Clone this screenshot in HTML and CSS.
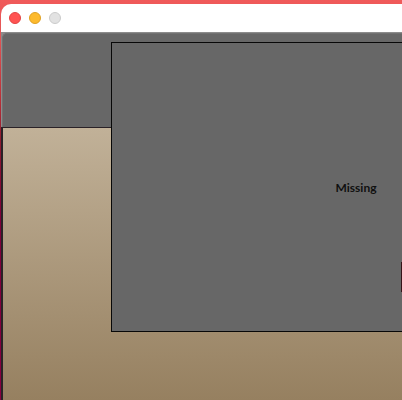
FILE: index.html
```
<!DOCTYPE html>
<html lang="en">
<head>
<meta charset="utf-8">
<title>Missing</title>
<link rel="stylesheet" href="styles.css">
</head>
<body>
<div class="window">
  <header class="titlebar">
    <button class="light close" type="button" aria-label="Close"></button>
    <button class="light minimize" type="button" aria-label="Minimize"></button>
    <button class="light zoom" type="button" aria-label="Zoom" disabled></button>
  </header>
  <main class="stage">
    <div class="header"><div class="panel"></div></div>
    <div class="backdrop"></div>
    <section class="dialog" role="dialog" aria-labelledby="message">
      <p class="message" id="message">Missing</p>
      <button class="action" type="button" aria-label="Confirm"></button>
    </section>
  </main>
</div>
</body>
</html>
```
FILE: styles.css
```
* {
  box-sizing: border-box;
}

body {
  margin: 0;
  height: 100vh;
  padding: 4px 0 0 1px;
  overflow: hidden;
  background: linear-gradient(#f05a5a 0, #e45656 32px, #b83038 100px, #8f1c30 140px, #80003a 220px, #8a0040 100%);
  font-family: Lato, sans-serif;
}

.window {
  display: flex;
  flex-direction: column;
  height: 100%;
  border-top-left-radius: 10px;
  background: #fff;
  overflow: hidden;
}

.titlebar {
  display: flex;
  flex: none;
  align-items: center;
  gap: 8px;
  height: 28px;
  padding: 0 8px;
}

.light {
  width: 12px;
  height: 12px;
  padding: 0;
  border: 1px solid;
  border-radius: 50%;
}

.close {
  background: #ff5352;
  border-color: #e24443;
}

.minimize {
  background: #fdba2d;
  border-color: #dfa023;
}

.zoom {
  background: #e2e2e2;
  border-color: #cbcbcb;
}

.stage {
  position: relative;
  display: flex;
  flex: 1;
  flex-direction: column;
  background: #2a2227;
  overflow: hidden;
}

.header {
  flex: none;
  height: 95px;
  padding: 1px 0 0 1px;
  background: #8c8c8c;
}

.panel {
  height: 100%;
  border: solid #727272;
  border-width: 1px 0 0 1px;
  border-top-left-radius: 5px;
  background: #676767;
}

.backdrop {
  flex: 1;
  margin: 1px 0 0 2px;
  background: linear-gradient(#c1b198, #968060);
}

.dialog {
  position: absolute;
  top: 10px;
  left: 110px;
  right: -199px;
  height: 290px;
  padding-top: 137px;
  border: 1px solid #080808;
  background: #676767;
}

.message {
  margin: 0;
  color: #101010;
  font-size: 12px;
  font-weight: 700;
  line-height: 16px;
  text-align: center;
}

.action {
  display: block;
  width: 80px;
  height: 30px;
  margin: 66px 0 0 289px;
  border: 1px solid #351418;
  background: #676767;
}
```
